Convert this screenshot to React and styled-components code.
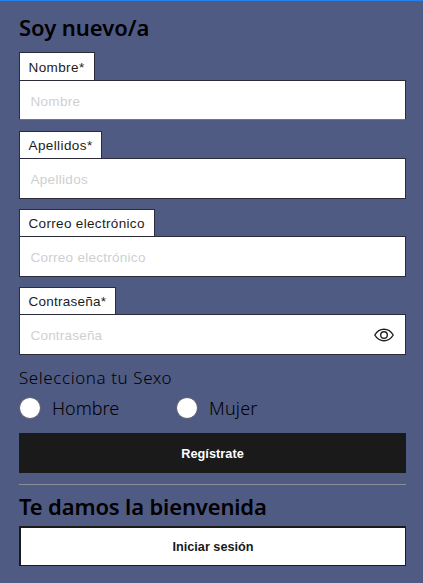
import React from 'react';
import styled, { createGlobalStyle } from 'styled-components';

const GlobalStyle = createGlobalStyle`
  * { box-sizing: border-box; }
  body { margin: 0; background: #505b84; overflow: hidden; }
`;

const Page = styled.main`
  height: 583px;
  padding: 0 17px 0 19px;
  border-top: 1px solid #2680eb;
  background: #505b84;
  color: #000;
  font-family: 'Liberation Sans', Arial, sans-serif;
  overflow: hidden;
`;

const Title = styled.h2`
  margin: 0;
  height: ${(p) => p.$height}px;
  font: 600 22px/${(p) => p.$line}px 'Noto Sans', sans-serif;
  letter-spacing: ${(p) => p.$spacing}px;
  white-space: nowrap;
`;

const Fields = styled.div`
  display: flex;
  flex-direction: column;
  gap: 10px;
`;

const Field = styled.div`
  display: flex;
  flex-direction: column;
  align-items: flex-start;
  margin-bottom: ${(p) => (p.$first ? 1 : 0)}px;
`;

const Label = styled.label`
  width: ${(p) => p.$width}px;
  height: ${(p) => (p.$first ? 28 : 27)}px;
  padding-left: 8.5px;
  border: 1px solid #2b2c38;
  border-bottom: 0;
  background: #fff;
  color: #1c1c1c;
  font-size: 13.5px;
  line-height: ${(p) => (p.$first ? 29 : 28)}px;
  letter-spacing: ${(p) => p.$spacing}px;
  white-space: nowrap;
`;

const InputBox = styled.div`
  display: flex;
  align-items: center;
  width: 100%;
  height: ${(p) => (p.$first ? 40 : 41)}px;
  padding: 0 11px 0 10.5px;
  border: 1px solid #2b2c38;
  border-bottom-color: ${(p) => (p.$first ? '#72757d' : '#2b2c38')};
  background: #fff;
`;

const Input = styled.input`
  flex: 1;
  min-width: 0;
  height: 100%;
  padding: 2px 0 0;
  border: 0;
  outline: 0;
  background: transparent;
  font: 13.5px 'Liberation Sans', Arial, sans-serif;
  letter-spacing: ${(p) => p.$spacing}px;
  &::placeholder { color: #cfcfd1; opacity: 1; }
`;

const EyeIcon = styled.svg`
  width: 20px;
  height: 14px;
  fill: none;
  stroke: #222;
  stroke-width: 1.4;
`;

const Prompt = styled.p`
  margin: 10px 0 0;
  height: 27px;
  font: 300 17px/26px 'Noto Sans', sans-serif;
  letter-spacing: 0.58px;
`;

const Options = styled.div`
  display: grid;
  grid-template-columns: 157px 1fr;
  height: 41px;
  padding-top: 5px;
`;

const Option = styled.label`
  display: flex;
  align-items: center;
  gap: 11px;
  height: 22px;
  font: 300 18px/22px 'Noto Sans', sans-serif;
  letter-spacing: ${(p) => p.$spacing}px;
`;

const Radio = styled.input`
  appearance: none;
  width: 22px;
  height: 22px;
  margin: 0;
  border: 1px solid #5c5f70;
  border-radius: 50%;
  background: #fff;
`;

const Button = styled.button`
  display: block;
  width: 100%;
  height: 40px;
  padding: 1px 0 0;
  border: 2px solid #1a1a1a;
  border-right-width: ${(p) => (p.$light ? 1 : 2)}px;
  border-bottom-width: ${(p) => (p.$light ? 1 : 2)}px;
  background: ${(p) => (p.$light ? '#fff' : '#1a1a1a')};
  color: ${(p) => (p.$light ? '#1a1a1a' : '#fff')};
  font: bold 12.7px 'Liberation Sans', Arial, sans-serif;
  letter-spacing: ${(p) => p.$spacing}px;
`;

const Divider = styled.hr`
  height: 1px;
  margin: 11px 0 0;
  border: 0;
  background: #8b8d99;
`;

const fields = [
  { id: 'nombre', label: 'Nombre*', hint: 'Nombre', width: 76, ls: 0.4, hs: 0.3 },
  { id: 'apellidos', label: 'Apellidos*', hint: 'Apellidos', width: 83, ls: 0.4, hs: 0.3 },
  { id: 'correo', label: 'Correo electrónico', hint: 'Correo electrónico', width: 136, ls: 0.33, hs: 0.27 },
  { id: 'clave', label: 'Contraseña*', hint: 'Contraseña', width: 97, ls: 0.25, hs: 0.2, eye: true },
];

export default function App() {
  return (
    <>
      <GlobalStyle />
      <Page>
        <Title $height={51} $line={53} $spacing={-0.05}>Soy nuevo/a</Title>
        <Fields>
          {fields.map((f, i) => (
            <Field key={f.id} $first={i === 0}>
              <Label htmlFor={f.id} $width={f.width} $first={i === 0} $spacing={f.ls}>{f.label}</Label>
              <InputBox $first={i === 0}>
                <Input id={f.id} placeholder={f.hint} $spacing={f.hs} />
                {f.eye && (
                  <EyeIcon viewBox="0 0 20 14">
                    <path d="M.8 7C3 3.2 6.2 1.2 10 1.2S17 3.2 19.2 7C17 10.8 13.8 12.8 10 12.8S3 10.8.8 7Z" />
                    <circle cx="10" cy="7" r="3.3" />
                  </EyeIcon>
                )}
              </InputBox>
            </Field>
          ))}
        </Fields>
        <Prompt>Selecciona tu Sexo</Prompt>
        <Options>
          <Option $spacing={0}><Radio type="radio" name="sexo" />Hombre</Option>
          <Option $spacing={0.2}><Radio type="radio" name="sexo" />Mujer</Option>
        </Options>
        <Button $spacing={0.05}>Regístrate</Button>
        <Divider />
        <Title $height={41} $line={43} $spacing={-0.15}>Te damos la bienvenida</Title>
        <Button $light $spacing={0}>Iniciar sesión</Button>
      </Page>
    </>
  );
}
